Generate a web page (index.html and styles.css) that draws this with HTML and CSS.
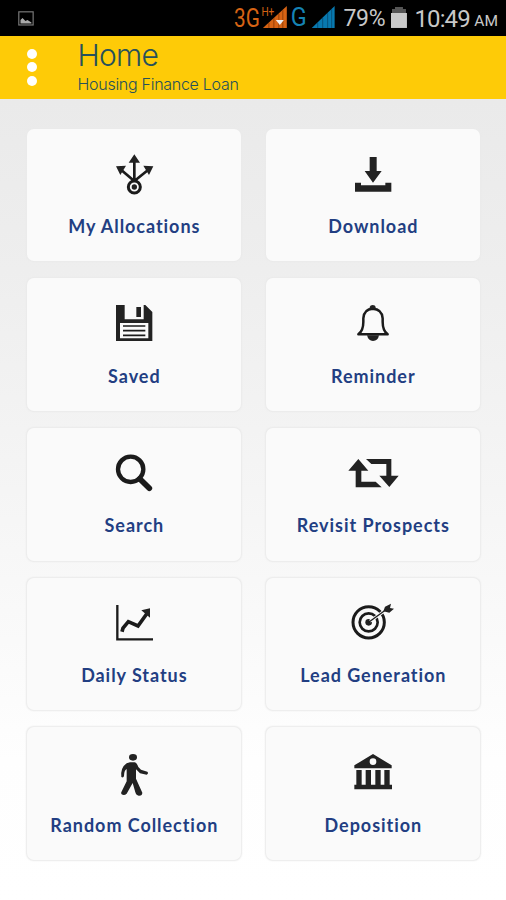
FILE: index.html
```html
<!DOCTYPE html>
<html lang="en">
<head>
<meta charset="utf-8">
<title>Home</title>
<link rel="stylesheet" href="styles.css">
</head>
<body>
<div class="status">
  <svg class="photo" viewBox="0 0 16 15"><rect x=".8" y=".8" width="14.4" height="13.2" fill="none" stroke="#777" stroke-width="1.2"/><path d="M2.5 12.5V9l2-2 3 3 2-1 4 2.500v1z" fill="#aaa"/></svg>
  <svg class="signals" viewBox="0 0 104 36">
    <text class="net orange" x="1" y="27" textLength="26" lengthAdjust="spacingAndGlyphs">3G</text>
    <text class="hplus" x="28.500" y="16" textLength="13" lengthAdjust="spacingAndGlyphs">H+</text>
    <path d="M30 28L54 6V28z" fill="#d66314"/><path d="M36 23v5M41 18v10M46 14v14M50 10v18" stroke="#954009"/>
    <path d="M43 20h8l-4 5z" fill="#eee"/>
    <text class="net blue" x="58" y="26.500" textLength="16" lengthAdjust="spacingAndGlyphs">G</text>
    <path d="M79 28L102 6V28z" fill="#0879b0"/><path d="M85 23v5M90 18v10M95 13v15M99 9v19" stroke="#07527c"/>
  </svg>
  <span class="percent">79%</span>
  <svg class="battery" viewBox="0 0 16 23"><path d="M4 1h8v2h3v5H1V3h3z" fill="#555"/><path d="M0 7h16v15H0z" fill="#c9c9c9"/></svg>
  <span class="clock">10:49</span><span class="ampm">AM</span>
</div>
<header class="header">
  <div class="menu"><i></i><i></i><i></i></div>
  <div class="titles"><h1>Home</h1><p>Housing Finance Loan</p></div>
</header>
<main class="grid">
  <div class="card">
    <svg class="icon" viewBox="252 87 180 150"><g class="line"><circle cx="343" cy="201" r="18" stroke-width="9"/><path d="M343 182V120M340 181L303 149M346 181L385 149" stroke-width="8"/></g><circle cx="343" cy="201" r="8"/><path d="M343 103L360 128H326zM288 139L318 137 301 165zM400 139L370 137 387 165z"/></svg>
    <span class="label">My Allocations</span>
  </div>
  <div class="card">
    <svg class="icon" viewBox="261 87 180 150"><path d="M341 111H362V153H377L351 188 326 153H341zM297 188H315V196H388V188H406V215H297z"/></svg>
    <span class="label">Download</span>
  </div>
  <div class="card">
    <svg class="icon" viewBox="252 86 180 150"><path fill-rule="evenodd" d="M288 107H314V150H371V107H376L397 128V215H288zM300 161V207H385V161z"/><path d="M349 113H363V143H349z"/><path d="M309 170H376M309 184H376M309 198H376" class="line" stroke-width="5"/></svg>
    <span class="label">Saved</span>
  </div>
  <div class="card">
    <svg class="icon" viewBox="261 86 180 150"><path class="line" stroke-width="7.500" stroke-linejoin="round" d="M307 195Q322 184 322 158V147Q324 119 350 118Q378 119 380 147V158Q380 184 395 195Z"/><path d="M341 118V113Q343 107 350 107Q358 107 359 113V118zM333 198H369Q366 215 351 215Q337 215 333 198z"/></svg>
    <span class="label">Reminder</span>
  </div>
  <div class="card">
    <svg class="icon" viewBox="252 85 180 150"><circle class="line" cx="332" cy="149" r="38" stroke-width="13"/><path class="line" d="M359 177L388 206" stroke-width="17" stroke-linecap="round"/></svg>
    <span class="label">Search</span>
  </div>
  <div class="card">
    <svg class="icon" viewBox="261 85 180 150"><path d="M307 118L337 153H316V186H359L377 203H299V153H277zM330 118H406V168H428L400 202 370 168H391V133H346z"/></svg>
    <span class="label">Revisit Prospects</span>
  </div>
  <div class="card">
    <svg class="icon" viewBox="252 84 180 150"><path class="line" d="M292 105V208H399" stroke-width="7"/><path class="line" d="M306 185L309 174 325 155 354 168 382 129" stroke-width="11"/><path d="M364 121L390 115V143z"/></svg>
    <span class="label">Daily Status</span>
  </div>
  <div class="card">
    <svg class="icon" viewBox="261 84 180 150"><circle class="line" cx="338" cy="157" r="47" stroke-width="9"/><circle class="line" cx="338" cy="157" r="27" stroke-width="8"/><circle cx="338" cy="157" r="10"/><path d="M342 154L384 124" stroke="#fafafa" stroke-width="9"/><path class="line" d="M338 157L396 115" stroke-width="4"/><path d="M382 124L387 110 405 101 402 114 414 116 400 128z"/></svg>
    <span class="label">Lead Generation</span>
  </div>
  <div class="card">
    <svg class="icon" viewBox="252 83 180 150"><ellipse cx="339" cy="114" rx="12" ry="10"/><path d="M330 129H344Q351 131 355 143L363 151 382 157Q387 162 380 166L360 162 348 150V178L367 220Q367 230 356 229Q349 229 346 219L338 191 320 223Q312 231 304 224Q302 220 306 214L320 186V149Q312 153 312 170Q310 177 304 173Q301 145 320 132Z"/></svg>
    <span class="label">Random Collection</span>
  </div>
  <div class="card">
    <svg class="icon" viewBox="261 83 180 150"><path fill-rule="evenodd" d="M351 104L407 138V147H295V138zM351 117A10 10 0 1 0 351 137A10 10 0 1 0 351 117z"/><path d="M301 152H317V197H301zM329 152H345V197H329zM358 152H374V197H358zM385 152H401V197H385zM295 196H408V210H295z"/></svg>
    <span class="label">Deposition</span>
  </div>
</main>
</body>
</html>
```
FILE: styles.css
```css
* { box-sizing: border-box; }
body {
  margin: 0;
  height: 900px;
  overflow: hidden;
  background: linear-gradient(#eaeaea 99px, #eeeeee 270px, #f3f3f3 430px, #f8f8f8 580px, #fefefe 760px, #fff);
  font-family: Lato, "Liberation Sans", sans-serif;
}
.status {
  display: flex;
  height: 36px;
  padding: 0 8px 0 18px;
  background: #000;
  color: #c8c8c8;
  font-family: Roboto, sans-serif;
  line-height: 38px;
}
.photo { width: 16px; height: 15px; margin-top: 11px; }
.signals { width: 104px; height: 36px; margin-left: 199px; }
.net { font-size: 26px; }
.orange, .hplus { fill: #d66314; }
.hplus { font-size: 12px; }
.blue { fill: #1583b4; }
.percent { width: 41px; margin-left: 7px; font-size: 23px; letter-spacing: -0.4px; }
.battery { width: 16px; height: 23px; margin: 6px 0 0 6px; }
.clock { width: 56px; margin-left: 8px; font-size: 24px; letter-spacing: -0.9px; }
.ampm { margin-left: 4px; font-size: 15.500px; line-height: 42px; }
.header {
  display: flex;
  height: 63px;
  background: #fecb07;
  color: #27515b;
  font-family: Inter, sans-serif;
}
.menu {
  display: flex;
  flex-direction: column;
  gap: 3.5px;
  width: 77.500px;
  padding: 12.500px 0 0 26.700px;
}
.menu i { width: 10.200px; height: 10.200px; border-radius: 50%; background: #fff; }
.titles h1 { margin: 0; font-size: 30px; font-weight: 300; line-height: 38px; letter-spacing: -0.7px; }
.titles p { margin: 0; font-size: 16px; font-weight: 300; line-height: 20px; letter-spacing: -0.28px; }
.grid {
  display: grid;
  grid-template-columns: 214.500px 214.500px;
  grid-auto-rows: 132.700px;
  gap: 17px 24.500px;
  padding: 29.500px 0 0 26.700px;
}
.card {
  display: flex;
  flex-direction: column;
  align-items: center;
  padding-top: 20px;
  border-radius: 7px;
  background: #fafafa;
  box-shadow: 0 0 1.500px 0.5px #eaeaea;
}
.icon { width: 60px; height: 50px; fill: #222; }
.line { fill: none; stroke: #1b1b1b; }
.label {
  margin-top: 15.500px;
  padding-left: 0.8px;
  color: #223e82;
  font-size: 18px;
  font-weight: 700;
  line-height: 24px;
  letter-spacing: 0.95px;
  white-space: nowrap;
}
```
